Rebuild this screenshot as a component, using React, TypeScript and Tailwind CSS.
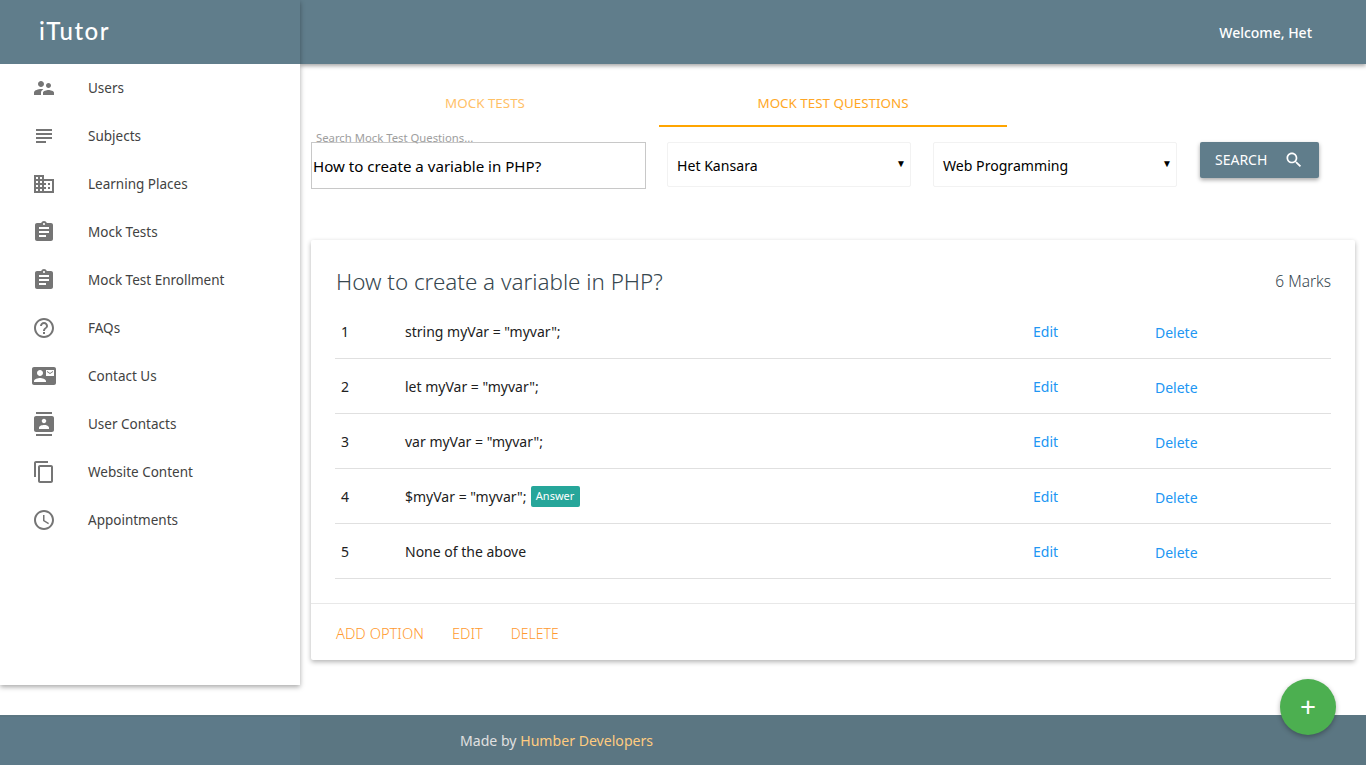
const PATHS = {
  people: 'M16.5 12c1.38 0 2.49-1.12 2.49-2.5S17.88 7 16.5 7C15.12 7 14 8.12 14 9.5s1.12 2.5 2.5 2.5zM9 11c1.66 0 2.99-1.34 2.99-3S10.66 5 9 5C7.34 5 6 6.34 6 8s1.34 3 3 3zm7.5 3c-1.83 0-5.5.92-5.5 2.75V19h11v-2.25c0-1.83-3.67-2.75-5.5-2.75zM9 13c-2.33 0-7 1.17-7 3.5V19h7v-2.25c0-.85.33-2.34 2.37-3.47C10.5 13.1 9.66 13 9 13z',
  subject: 'M14 17H4v2h10v-2zm6-8H4v2h16V9zM4 15h16v-2H4v2zM4 5v2h16V5H4z',
  domain: 'M12 7V3H2v18h20V7H12zM6 19H4v-2h2v2zm0-4H4v-2h2v2zm0-4H4V9h2v2zm0-4H4V5h2v2zm4 12H8v-2h2v2zm0-4H8v-2h2v2zm0-4H8V9h2v2zm0-4H8V5h2v2zm10 12h-8v-2h2v-2h-2v-2h2v-2h-2V9h8v10zm-2-8h-2v2h2v-2zm0 4h-2v2h2v-2z',
  assignment: 'M19 3h-4.18C14.4 1.84 13.3 1 12 1c-1.3 0-2.4.84-2.82 2H5c-1.1 0-2 .9-2 2v14c0 1.1.9 2 2 2h14c1.1 0 2-.9 2-2V5c0-1.1-.9-2-2-2zm-7 0c.55 0 1 .45 1 1s-.45 1-1 1-1-.45-1-1 .45-1 1-1zm2 14H7v-2h7v2zm3-4H7v-2h10v2zm0-4H7V7h10v2z',
  help: 'M11 18h2v-2h-2v2zm1-16C6.48 2 2 6.48 2 12s4.48 10 10 10 10-4.48 10-10S17.52 2 12 2zm0 18c-4.41 0-8-3.59-8-8s3.59-8 8-8 8 3.59 8 8-3.59 8-8 8zm0-14c-2.21 0-4 1.79-4 4h2c0-1.1.9-2 2-2s2 .9 2 2c0 2-3 1.75-3 5h2c0-2.25 3-2.5 3-5 0-2.21-1.79-4-4-4z',
  contactMail: 'M21 8V7l-3 2-3-2v1l3 2 3-2zm1-5H2C.9 3 0 3.9 0 5v14c0 1.1.9 2 2 2h20c1.1 0 1.99-.9 1.99-2L24 5c0-1.1-.9-2-2-2zM8 6c1.66 0 3 1.34 3 3s-1.34 3-3 3-3-1.34-3-3 1.34-3 3-3zm6 12H2v-1c0-2 4-3.1 6-3.1s6 1.1 6 3.1v1zm8-6h-8V6h8v6z',
  contacts: 'M20 0H4v2h16V0zM4 24h16v-2H4v2zM20 4H4c-1.1 0-2 .9-2 2v12c0 1.1.9 2 2 2h16c1.1 0 2-.9 2-2V6c0-1.1-.9-2-2-2zm-8 2.75c1.24 0 2.25 1.01 2.25 2.25s-1.01 2.25-2.25 2.25S9.75 10.24 9.75 9 10.76 6.75 12 6.75zM17 17H7v-1.5c0-1.67 3.33-2.5 5-2.5s5 .83 5 2.5V17z',
  copy: 'M16 1H4c-1.1 0-2 .9-2 2v14h2V3h12V1zm3 4H8c-1.1 0-2 .9-2 2v14c0 1.1.9 2 2 2h11c1.1 0 2-.9 2-2V7c0-1.1-.9-2-2-2zm0 16H8V7h11v14z',
  clock: 'M11.99 2C6.47 2 2 6.48 2 12s4.47 10 9.99 10C17.52 22 22 17.52 22 12S17.52 2 11.99 2zM12 20c-4.42 0-8-3.58-8-8s3.58-8 8-8 8 3.58 8 8-3.58 8-8 8zm.5-13H11v6l5.25 3.15.75-1.23-4.5-2.67z',
  search: 'M15.5 14h-.79l-.28-.27C15.41 12.59 16 11.11 16 9.5 16 5.91 13.09 3 9.5 3S3 5.91 3 9.5 5.91 16 9.5 16c1.61 0 3.09-.59 4.23-1.57l.27.28v.79l5 4.99L20.49 19l-4.99-5zm-6 0C7.01 14 5 11.99 5 9.5S7.01 5 9.5 5 14 7.01 14 9.5 11.99 14 9.5 14z',
}

const NAV = [
  { label: 'Users', icon: PATHS.people },
  { label: 'Subjects', icon: PATHS.subject },
  { label: 'Learning Places', icon: PATHS.domain },
  { label: 'Mock Tests', icon: PATHS.assignment },
  { label: 'Mock Test Enrollment', icon: PATHS.assignment },
  { label: 'FAQs', icon: PATHS.help },
  { label: 'Contact Us', icon: PATHS.contactMail },
  { label: 'User Contacts', icon: PATHS.contacts },
  { label: 'Website Content', icon: PATHS.copy },
  { label: 'Appointments', icon: PATHS.clock },
]

const OPTIONS = ['string myVar = "myvar";', 'let myVar = "myvar";', 'var myVar = "myvar";', '$myVar = "myvar";', 'None of the above']

function Sidebar() {
  return (
    <aside className="z-20 h-[685px] w-[300px] shrink-0 bg-white shadow-[0_2px_5px_rgba(0,0,0,0.35)]">
      <div className="flex h-16 items-center bg-[#607d8b] pb-[3px] pl-[39px] font-['Lato',sans-serif] text-[24px] font-medium tracking-[1.5px] text-white">iTutor</div>
      <nav>
        {NAV.map(item => (
          <div key={item.label} className="flex h-12 items-center pl-8 text-[#424242]">
            <svg viewBox="0 0 24 24" className="h-6 w-6 fill-[#757575]"><path d={item.icon} /></svg>
            <span className="ml-8 text-[13.5px]">{item.label}</span>
          </div>
        ))}
      </nav>
    </aside>
  )
}

function Select({ value }: { value: string }) {
  return (
    <div className="flex h-[45px] w-[244px] items-center justify-between rounded-[2px] border border-[#f2f2f2] pl-[9px] pr-[4px] text-[14.1px] text-black">
      <span className="mt-[3px]">{value}</span>
      <span className="mb-[3px] text-[10px]">▼</span>
    </div>
  )
}

function OptionRow({ n, text, answer }: { n: number; text: string; answer?: boolean }) {
  return (
    <div className="flex h-[55px] items-center border-b border-[#e0e0e0] text-[14px] text-[#212121]">
      <span className="w-[70px] pl-[6px]">{n}</span>
      <span className="flex w-[628px] items-center">
        {text}
        {answer && <span className="ml-[4px] flex h-[21px] w-[49px] items-center justify-center rounded-[2px] bg-[#26a69a] text-[11px] text-white">Answer</span>}
      </span>
      <span className="w-[122px] text-[#2196f3]">Edit</span>
      <span className="mt-[2px] text-[#2196f3]">Delete</span>
    </div>
  )
}

export default function App() {
  return (
    <div className="relative flex h-[765px] flex-col overflow-hidden bg-white font-['Noto_Sans',sans-serif]">
      <div className="flex h-[715px]">
        <Sidebar />
        <div className="flex-1">
          <header className="flex h-16 items-center justify-end bg-[#607d8b] pr-[54px] text-[14px] font-medium text-white shadow-[0_2px_4px_rgba(0,0,0,0.35)]">
            Welcome, Het
          </header>
          <main className="pl-[11px] pr-[11px]">
            <div className="flex h-[63px] w-[696px] text-[13.4px] text-[#ffa726]">
              <div className="flex w-[348px] items-center justify-center pt-[15px] opacity-70">MOCK TESTS</div>
              <div className="flex w-[348px] items-center justify-center border-b-2 border-[#ffa500] pt-[17px]">MOCK TEST QUESTIONS</div>
            </div>
            <div className="relative flex pt-[15px]">
              <span className="absolute left-[5px] top-[3px] text-[11.3px] text-[#9e9e9e]">Search Mock Test Questions...</span>
              <div className="flex h-[47px] w-[335px] items-center border border-[#c8c8c8] pl-[1px] pt-[1px] text-[15.1px] text-black">How to create a variable in PHP?</div>
              <div className="ml-[21px]"><Select value="Het Kansara" /></div>
              <div className="ml-[22px]"><Select value="Web Programming" /></div>
              <button className="ml-[23px] flex h-9 w-[119px] items-center rounded-[2px] bg-[#607d8b] pb-[1px] pl-[15px] text-[14px] text-white shadow-[0_2px_4px_rgba(0,0,0,0.35)]">
                SEARCH
                <svg viewBox="0 0 24 24" className="ml-[17px] h-5 w-5 fill-white"><path d={PATHS.search} /></svg>
              </button>
            </div>
            <section className="mt-[51px] h-[420px] rounded-[2px] bg-white shadow-[0_2px_5px_rgba(0,0,0,0.3)]">
              <div className="h-[363px] px-[24px] pt-6">
                <div className="flex items-center justify-between">
                  <h1 className="pl-[1px] text-[22.4px] font-light leading-9 text-[#37474f]">How to create a variable in PHP?</h1>
                  <span className="text-[15.5px] font-light text-[#37474f]">6 Marks</span>
                </div>
                <div className="mt-[4px]">
                  {OPTIONS.map((o, i) => <OptionRow key={o} n={i + 1} text={o} answer={i === 3} />)}
                </div>
              </div>
              <div className="flex h-[57px] items-center gap-7 border-t border-[#e8e8e8] pl-[25px] pt-[2px] text-[14.7px] font-light text-[#ff9a30]">
                <span>ADD OPTION</span>
                <span>EDIT</span>
                <span className="text-[14px]">DELETE</span>
              </div>
            </section>
          </main>
        </div>
      </div>
      <footer className="flex h-[50px] items-center bg-[#5b7682] pt-[2px] text-[14.1px] text-[#e0e0e0]">
        <div className="h-full w-[300px] bg-[#5d7a89]" />
        <span className="ml-[160px]">Made by <span className="text-[#ffcc80]">Humber Developers</span></span>
      </footer>
      <button className="absolute left-[1280px] top-[679px] z-30 flex h-14 w-14 items-center justify-center rounded-full bg-[#4caf50] pb-[2px] text-[28px] leading-none text-white shadow-[0_2px_5px_rgba(0,0,0,0.3)]">+</button>
    </div>
  )
}
